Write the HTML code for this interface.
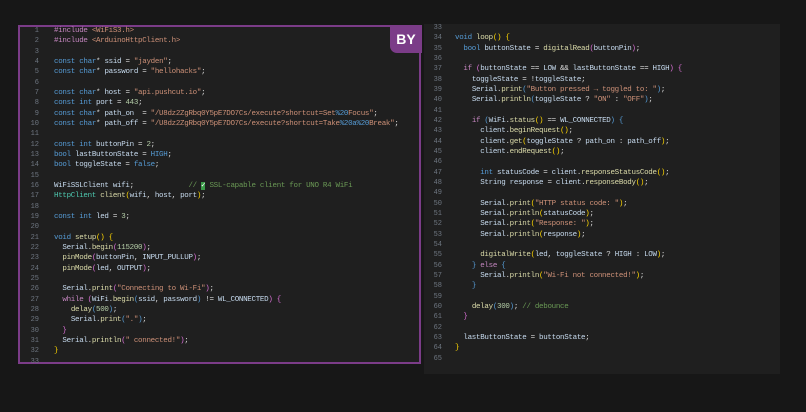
<!DOCTYPE html>
<html><head><meta charset="utf-8"><style>
body{margin:0;width:806px;height:412px;background:#171717;position:relative;overflow:hidden;font-family:"Liberation Mono",monospace;}
.panel{position:absolute;background:#1f1f1f;}
#L{left:18px;top:25px;width:399px;height:335px;border:2px solid #7b3c88;}
#R{left:424px;top:24px;width:356px;height:350px;}
.code{position:absolute;font-size:7.5px;letter-spacing:-0.3px;line-height:10.33px;white-space:pre;color:#dcdcdc;}
.ln{position:absolute;font-size:7px;line-height:10.33px;white-space:pre;color:#6e7681;text-align:right;width:20px;}
.k{color:#569cd6}.s{color:#ce9178}.f{color:#dcdcaa}.v{color:#c8dcf0}.n{color:#b5cea8}.c{color:#6a9955}.p{color:#c586c0}.t{color:#4ec9b0}.y{color:#ffd700}.m{color:#da70d6}
#by{position:absolute;left:390px;top:25px;width:32px;height:28px;background:#7b3c88;border-bottom-left-radius:7px;color:#fff;font-family:"Liberation Sans",sans-serif;font-weight:bold;font-size:14px;line-height:28px;text-align:center;}
</style></head><body>
<div class="panel" id="L"></div>
<div class="panel" id="R"></div>
<div class="ln" style="left:19px;top:26px;">1
2
3
4
5
6
7
8
9
10
11
12
13
14
15
16
17
18
19
20
21
22
23
24
25
26
27
28
29
30
31
32
33</div>
<div class="code" style="left:54px;top:26px;"><span class="p">#include</span> <span class="s">&lt;WiFiS3.h&gt;</span>
<span class="p">#include</span> <span class="s">&lt;ArduinoHttpClient.h&gt;</span>

<span class="k">const</span> <span class="k">char</span>* <span class="v">ssid</span> = <span class="s">"jayden"</span>;
<span class="k">const</span> <span class="k">char</span>* <span class="v">password</span> = <span class="s">"hellohacks"</span>;

<span class="k">const</span> <span class="k">char</span>* <span class="v">host</span> = <span class="s">"api.pushcut.io"</span>;
<span class="k">const</span> <span class="k">int</span> <span class="v">port</span> = <span class="n">443</span>;
<span class="k">const</span> <span class="k">char</span>* <span class="v">path_on</span>  = <span class="s">"/U8dz2ZgRbq0Y5pE7DO7Cs/execute?shortcut=Set</span><span class="k">%20</span><span class="s">Focus"</span>;
<span class="k">const</span> <span class="k">char</span>* <span class="v">path_off</span> = <span class="s">"/U8dz2ZgRbq0Y5pE7DO7Cs/execute?shortcut=Take</span><span class="k">%20a%20</span><span class="s">Break"</span>;

<span class="k">const</span> <span class="k">int</span> <span class="v">buttonPin</span> = <span class="n">2</span>;
<span class="k">bool</span> <span class="v">lastButtonState</span> = <span class="k">HIGH</span>;
<span class="k">bool</span> <span class="v">toggleState</span> = <span class="k">false</span>;

<span class="v">WiFiSSLClient</span> <span class="v">wifi</span>;             <span class="c">// <span style="background:#3a9a48;color:#fff">✓</span> SSL-capable client for UNO R4 WiFi</span>
<span class="t">HttpClient</span> <span class="f">client</span><span class="y">(</span><span class="v">wifi</span>, <span class="v">host</span>, <span class="v">port</span><span class="y">)</span>;

<span class="k">const</span> <span class="k">int</span> <span class="v">led</span> = <span class="n">3</span>;

<span class="k">void</span> <span class="f">setup</span><span class="y">()</span> <span class="y">{</span>
  <span class="v">Serial</span>.<span class="f">begin</span><span class="m">(</span><span class="n">115200</span><span class="m">)</span>;
  <span class="f">pinMode</span><span class="m">(</span><span class="v">buttonPin</span>, <span class="v">INPUT_PULLUP</span><span class="m">)</span>;
  <span class="f">pinMode</span><span class="m">(</span><span class="v">led</span>, <span class="v">OUTPUT</span><span class="m">)</span>;

  <span class="v">Serial</span>.<span class="f">print</span><span class="m">(</span><span class="s">"Connecting to Wi-Fi"</span><span class="m">)</span>;
  <span class="p">while</span> <span class="m">(</span><span class="v">WiFi</span>.<span class="f">begin</span><span class="k">(</span><span class="v">ssid</span>, <span class="v">password</span><span class="k">)</span> != <span class="v">WL_CONNECTED</span><span class="m">)</span> <span class="m">{</span>
    <span class="f">delay</span><span class="k">(</span><span class="n">500</span><span class="k">)</span>;
    <span class="v">Serial</span>.<span class="f">print</span><span class="k">(</span><span class="s">"."</span><span class="k">)</span>;
  <span class="m">}</span>
  <span class="v">Serial</span>.<span class="f">println</span><span class="m">(</span><span class="s">" connected!"</span><span class="m">)</span>;
<span class="y">}</span>
</div>
<div id="by">BY</div>
<div class="ln" style="left:422px;top:23px;">33
34
35
36
37
38
39
40
41
42
43
44
45
46
47
48
49
50
51
52
53
54
55
56
57
58
59
60
61
62
63
64
65</div>
<div class="code" style="left:455px;top:23px;">
<span class="k">void</span> <span class="f">loop</span><span class="y">()</span> <span class="y">{</span>
  <span class="k">bool</span> <span class="v">buttonState</span> = <span class="f">digitalRead</span><span class="m">(</span><span class="v">buttonPin</span><span class="m">)</span>;

  <span class="p">if</span> <span class="m">(</span><span class="v">buttonState</span> == <span class="v">LOW</span> &amp;&amp; <span class="v">lastButtonState</span> == <span class="v">HIGH</span><span class="m">)</span> <span class="m">{</span>
    <span class="v">toggleState</span> = !<span class="v">toggleState</span>;
    <span class="v">Serial</span>.<span class="f">print</span><span class="k">(</span><span class="s">"Button pressed → toggled to: "</span><span class="k">)</span>;
    <span class="v">Serial</span>.<span class="f">println</span><span class="k">(</span><span class="v">toggleState</span> ? <span class="s">"ON"</span> : <span class="s">"OFF"</span><span class="k">)</span>;

    <span class="p">if</span> <span class="k">(</span><span class="v">WiFi</span>.<span class="f">status</span><span class="y">()</span> == <span class="v">WL_CONNECTED</span><span class="k">)</span> <span class="k">{</span>
      <span class="v">client</span>.<span class="f">beginRequest</span><span class="y">()</span>;
      <span class="v">client</span>.<span class="f">get</span><span class="y">(</span><span class="v">toggleState</span> ? <span class="v">path_on</span> : <span class="v">path_off</span><span class="y">)</span>;
      <span class="v">client</span>.<span class="f">endRequest</span><span class="y">()</span>;

      <span class="k">int</span> <span class="v">statusCode</span> = <span class="v">client</span>.<span class="f">responseStatusCode</span><span class="y">()</span>;
      <span class="v">String</span> <span class="v">response</span> = <span class="v">client</span>.<span class="f">responseBody</span><span class="y">()</span>;

      <span class="v">Serial</span>.<span class="f">print</span><span class="y">(</span><span class="s">"HTTP status code: "</span><span class="y">)</span>;
      <span class="v">Serial</span>.<span class="f">println</span><span class="y">(</span><span class="v">statusCode</span><span class="y">)</span>;
      <span class="v">Serial</span>.<span class="f">print</span><span class="y">(</span><span class="s">"Response: "</span><span class="y">)</span>;
      <span class="v">Serial</span>.<span class="f">println</span><span class="y">(</span><span class="v">response</span><span class="y">)</span>;

      <span class="f">digitalWrite</span><span class="y">(</span><span class="v">led</span>, <span class="v">toggleState</span> ? <span class="v">HIGH</span> : <span class="v">LOW</span><span class="y">)</span>;
    <span class="k">}</span> <span class="p">else</span> <span class="k">{</span>
      <span class="v">Serial</span>.<span class="f">println</span><span class="y">(</span><span class="s">"Wi-Fi not connected!"</span><span class="y">)</span>;
    <span class="k">}</span>

    <span class="f">delay</span><span class="k">(</span><span class="n">300</span><span class="k">)</span>; <span class="c">// debounce</span>
  <span class="m">}</span>

  <span class="v">lastButtonState</span> = <span class="v">buttonState</span>;
<span class="y">}</span>
</div>
</body></html>
